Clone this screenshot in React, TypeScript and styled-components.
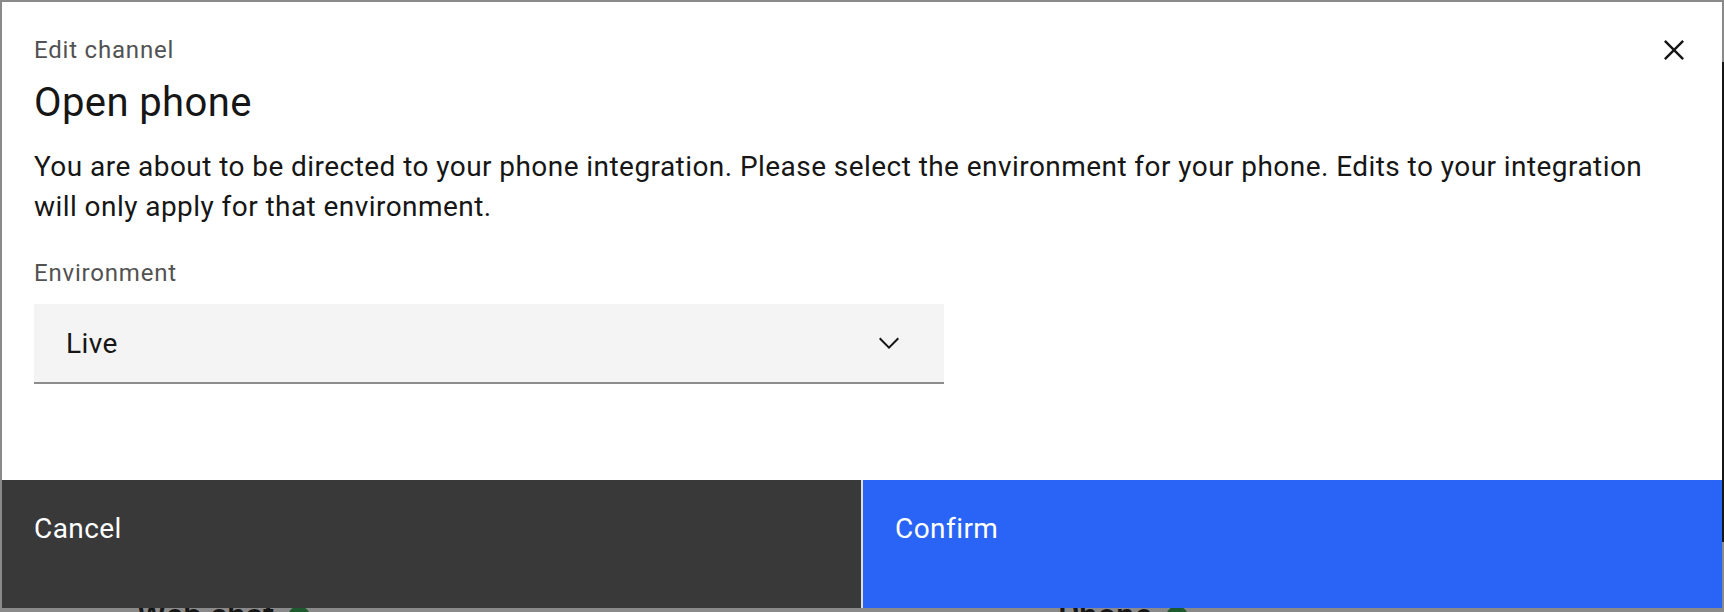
import styled, { createGlobalStyle } from 'styled-components'

const GlobalStyle = createGlobalStyle`
  html, body {
    margin: 0;
    padding: 0;
    background: #ffffff;
    font-family: Roboto, "Noto Sans", "Liberation Sans", sans-serif;
    color: #161616;
  }
  * {
    box-sizing: border-box;
  }
`

// page behind the modal, only its channel titles peek out under the dialog
const Page = styled.main`
  height: 612px;
  overflow: hidden;
  padding: 595px 0 0 137px;
  display: grid;
  grid-template-columns: 921px 1fr;
`

const ChannelTitle = styled.div`
  display: flex;
  align-items: flex-start;
  gap: 14px;
  font-size: 33px;
  line-height: 42px;
  font-weight: 500;
  color: #161616;

  .dot {
    margin-top: 11px;
    width: 22px;
    height: 22px;
    border-radius: 50%;
    background: #24a148;
  }
`

const ScrollThumb = styled.div`
  position: fixed;
  top: 62px;
  right: 0;
  width: 2px;
  height: 480px;
  background: #161616;
`

const Overlay = styled.div`
  position: fixed;
  inset: 0;
  padding: 2px;
  background: rgba(22, 22, 22, 0.5);
  display: flex;
  align-items: flex-start;
`

const Modal = styled.div`
  width: 100%;
  background: #ffffff;
  display: flex;
  flex-direction: column;
`

const Header = styled.header`
  position: relative;
  padding: 32px 32px 0 32px;
`

const Label = styled.div`
  font-size: 24px;
  line-height: 32px;
  letter-spacing: 0.8px;
  color: #525252;
`

const Title = styled.h2`
  margin: 9px 0 0 0;
  font-size: 40px;
  line-height: 56px;
  font-weight: 400;
  letter-spacing: 0.4px;
  color: #161616;
`

const CloseButton = styled.button`
  position: absolute;
  top: 0;
  right: 0;
  width: 96px;
  height: 96px;
  border: none;
  background: transparent;
  padding: 0;
  display: flex;
  align-items: center;
  justify-content: center;
  cursor: pointer;

  svg {
    width: 40px;
    height: 40px;
    fill: #161616;
  }
`

const Content = styled.section`
  padding: 16px 32px 96px 32px;
`

const Text = styled.p`
  margin: 0;
  max-width: 1640px;
  font-size: 28px;
  line-height: 40px;
  letter-spacing: 0.44px;
  color: #161616;
`

const Field = styled.div`
  margin-top: 30px;
`

const FieldLabel = styled.label`
  display: block;
  margin-bottom: 15px;
  font-size: 24px;
  line-height: 32px;
  letter-spacing: 0.8px;
  color: #525252;
`

const Select = styled.div`
  width: 910px;
  height: 80px;
  padding: 0 39px 0 32px;
  background: #f4f4f4;
  border-bottom: 2px solid #8d8d8d;
  display: flex;
  align-items: center;
  justify-content: space-between;
  font-size: 28px;
  letter-spacing: 0.44px;
  color: #161616;

  svg {
    width: 32px;
    height: 32px;
    fill: #161616;
  }
`

const Footer = styled.footer`
  display: flex;
  gap: 2px;
  background: #e0e0e0;
`

const FooterButton = styled.button<{ $primary?: boolean }>`
  flex: 1;
  height: 128px;
  border: none;
  margin: 0;
  padding: 31px 32px;
  display: flex;
  align-items: flex-start;
  text-align: left;
  font-family: inherit;
  font-size: 28px;
  line-height: 36px;
  letter-spacing: 0.44px;
  color: #ffffff;
  background: ${(p) => (p.$primary ? '#2a64f6' : '#393939')};
  cursor: pointer;
`

const CloseIcon = () => (
  <svg viewBox="0 0 32 32" aria-hidden="true">
    <path d="M24 9.4L22.6 8 16 14.6 9.4 8 8 9.4 14.6 16 8 22.6 9.4 24 16 17.4 22.6 24 24 22.6 17.4 16 24 9.4z" />
  </svg>
)

const ChevronDown = () => (
  <svg viewBox="0 0 16 16" aria-hidden="true">
    <path d="M8 11L3 6 3.7 5.3 8 9.6 12.3 5.3 13 6z" />
  </svg>
)

export default function App() {
  return (
    <>
      <GlobalStyle />
      <Page>
        <ChannelTitle>
          Web chat <span className="dot" />
        </ChannelTitle>
        <ChannelTitle>
          Phone <span className="dot" />
        </ChannelTitle>
      </Page>
      <ScrollThumb />
      <Overlay>
        <Modal role="dialog">
          <Header>
            <Label>Edit channel</Label>
            <Title>Open phone</Title>
            <CloseButton aria-label="Close">
              <CloseIcon />
            </CloseButton>
          </Header>
          <Content>
            <Text>
              You are about to be directed to your phone integration. Please select the environment for your phone. Edits
              to your integration will only apply for that environment.
            </Text>
            <Field>
              <FieldLabel>Environment</FieldLabel>
              <Select>
                <span>Live</span>
                <ChevronDown />
              </Select>
            </Field>
          </Content>
          <Footer>
            <FooterButton>Cancel</FooterButton>
            <FooterButton $primary>Confirm</FooterButton>
          </Footer>
        </Modal>
      </Overlay>
    </>
  )
}
